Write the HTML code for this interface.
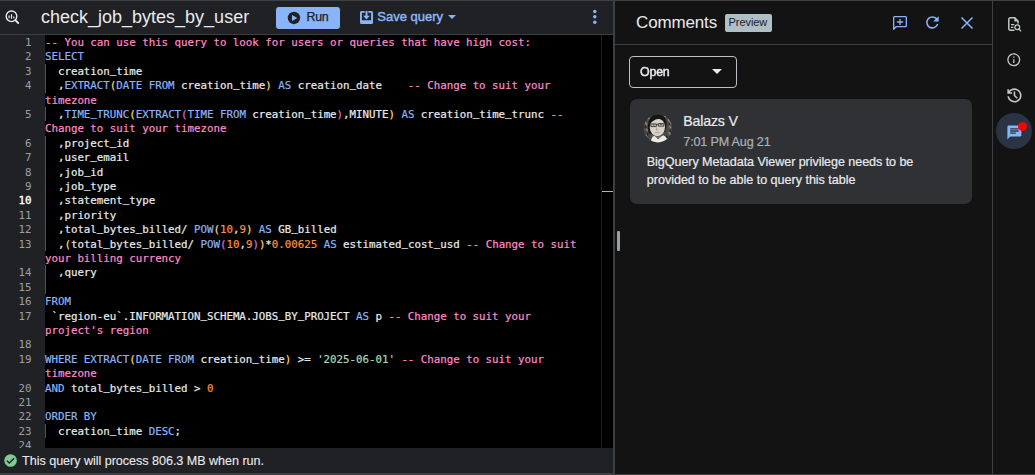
<!DOCTYPE html>
<html lang="en">
<head>
<meta charset="utf-8">
<title>check_job_bytes_by_user</title>
<style>
*{box-sizing:border-box;margin:0;padding:0}
html,body{width:1035px;height:475px;overflow:hidden;background:#131314}
body{position:relative;font-family:"Liberation Sans",sans-serif;color:#e8eaed}
.abs,.t{position:absolute}
.t{white-space:nowrap;line-height:1}
svg{position:absolute;display:block;overflow:visible}
#topline{left:0;top:0;width:1035px;height:1px;background:#3c4043}
#left{left:0;top:1px;width:613px;height:474px;background:#202124}
#hdrline{left:0;top:34px;width:613px;height:1px;background:#3c4043}
#title{left:41px;top:8px;font-size:18px;color:#e8eaed}
#run{left:276px;top:7px;width:64px;height:22px;background:#8ab4f8;border-radius:3px}
#runt{left:306.6px;top:11px;font-size:12.4px;letter-spacing:-0.3px;color:#202124;-webkit-text-stroke:0.25px #202124}
#save{left:377.3px;top:10px;font-size:13px;letter-spacing:0px;color:#8ab4f8;-webkit-text-stroke:0.45px #8ab4f8}
#editor{left:45px;top:35px;width:557px;height:413px;background:#000}
#gutter{left:0;top:35px;width:45px;height:413px;background:#202124}
#mini{left:601px;top:35px;width:12px;height:413px;background:#000;border-left:1px solid #1f1f1f}
#mini i{position:absolute;left:0;top:156px;width:11px;height:1px;background:#b4b4b4}
#code{position:absolute;left:0;top:35px;width:613px;height:413px;overflow:hidden}
.ln,.cl{position:absolute;font-family:"DejaVu Sans Mono","Liberation Mono",monospace;font-size:10.8px;letter-spacing:-0.022px;line-height:14.4px;height:14.4px;white-space:pre;-webkit-text-stroke:0.2px}
.cl u{text-decoration:none;position:relative;top:-2px}
.ln{left:0;width:31.5px;text-align:right;color:#9aa0a6;-webkit-text-stroke:0}
.ln.cur{color:#fff;-webkit-text-stroke:0.35px #fff}
.cl{left:45px;color:#e8eaed}
.ig{position:absolute;left:45px;width:1px;height:14.4px;background:#505254}
.c{color:#ff8bcb}.k{color:#8ab4f8}.s{color:#a8dab5}.n{color:#fa903e}.b1{color:#fdd663}.b2{color:#da70d6}
#status{left:0;top:448px;width:613px;height:25px;background:#202124}
#stt{left:22.1px;top:455px;font-size:12.6px;letter-spacing:-0.04px;color:#e8eaed;-webkit-text-stroke:0.1px}
#botline{left:0;top:473px;width:613px;height:2px;background:#3c4043}
#botline2{left:615px;top:474px;width:420px;height:1px;background:#3c4043}
#vdiv{left:613px;top:1px;width:2px;height:474px;background:#3c4043}
#grip{left:617px;top:231px;width:3px;height:20px;background:#9aa0a6;border-radius:1px}
#chdrline{left:615px;top:44px;width:377px;height:1px;background:#3c4043}
#ctitle{left:636px;top:14px;font-size:17px;letter-spacing:-0.14px;color:#e8eaed}
#badge{left:725px;top:14px;width:47px;height:18px;background:#b0bec5;border-radius:2px}
#badget{left:728.6px;top:17px;font-size:11px;letter-spacing:-0.07px;color:#202124}
#dd{left:629px;top:56px;width:108px;height:32px;border:1px solid #bdc1c6;border-radius:4px}
#ddt{left:639.6px;top:66px;font-size:12.4px;letter-spacing:-0.2px;color:#e8eaed;-webkit-text-stroke:0.45px #e8eaed;will-change:transform}
#card{left:630px;top:99px;width:342px;height:105px;background:#303134;border-radius:7px}
#name{left:683.3px;top:114px;font-size:14.2px;letter-spacing:-0.19px;color:#e8eaed;-webkit-text-stroke:0.2px}
#time{left:683.3px;top:136px;font-size:12.6px;letter-spacing:-0.175px;color:#abb2ba;-webkit-text-stroke:0.2px}
#body1{left:646.8px;top:156px;font-size:12.6px;letter-spacing:-0.076px;color:#e8eaed;-webkit-text-stroke:0.2px}
#body2{left:646.8px;top:174px;font-size:12.6px;letter-spacing:-0.035px;color:#e8eaed;-webkit-text-stroke:0.2px}
#rdiv{left:992px;top:1px;width:1px;height:474px;background:#3c4043}
#act{left:996px;top:113px;width:36px;height:36px;border-radius:18px;background:#2b3445}
#dot{left:1018px;top:122px;width:9px;height:9px;border-radius:50%;background:#ff0000}
</style>
</head>
<body>
<div class="abs" id="left"></div>
<div class="abs" id="hdrline"></div>
<!-- query icon -->
<svg style="left:4px;top:9px" width="16" height="16" viewBox="0 0 16 16"><circle cx="7.5" cy="7.3" r="5.3" fill="none" stroke="#e8eaed" stroke-width="1.4"/><path d="M11.3 11.1l2.900 2.900" stroke="#e8eaed" stroke-width="1.8" stroke-linecap="round"/><path d="M5.1 6.6v2.6M7.5 5.2v4.6M9.8 7.4v1.9" stroke="#e8eaed" stroke-width="1.2"/></svg>
<div class="t" id="title">check_job_bytes_by_user</div>
<div class="abs" id="run"></div>
<svg style="left:287px;top:11px" width="14" height="14" viewBox="0 0 14 14"><circle cx="6.95" cy="6.95" r="6.2" fill="#202124"/><path fill="#8ab4f8" d="M5 3.9v6.2l5.300-3.100z"/></svg>
<div class="t" id="runt">Run</div>
<!-- save icon -->
<svg style="left:360px;top:10.5px" width="13" height="13" viewBox="0 0 13 13"><path fill="#8ab4f8" fill-rule="evenodd" d="M1.5 0h3.2v1.8H1.9v7.4h9.2V1.8H8.3V0h3.2A1.5 1.5 0 0 1 13 1.5v10a1.5 1.5 0 0 1-1.5 1.5h-10A1.5 1.5 0 0 1 0 11.500v-10A1.5 1.500 0 0 1 1.500 0z"/><path fill="#8ab4f8" d="M5.500 0h2v4.800h2.400L6.500 8.500 3.100 4.800h2.400z"/></svg>
<div class="t" id="save">Save query</div>
<svg style="left:448.2px;top:14.8px" width="8" height="4" viewBox="0 0 8 4"><path fill="#8ab4f8" d="M0 0h8L4 4z"/></svg>
<svg style="left:592px;top:9px" width="6" height="16" viewBox="0 0 6 16"><circle cx="2.800" cy="2.400" r="1.750" fill="#8ab4f8"/><circle cx="2.800" cy="7.800" r="1.750" fill="#8ab4f8"/><circle cx="2.800" cy="13.300" r="1.750" fill="#8ab4f8"/></svg>
<div class="abs" id="gutter"></div>
<div class="abs" id="editor"></div>
<div class="abs" id="mini"><i></i></div>
<div id="code">
<div class="ln" style="top:1px">1</div>
<div class="cl" style="top:1px"><span class="c">-- You can use this query to look for users or queries that have high cost:</span></div>
<div class="ln" style="top:15.4px">2</div>
<div class="cl" style="top:15.4px"><span class="k">SELECT</span></div>
<div class="ln" style="top:29.8px">3</div>
<i class="ig" style="top:28.8px"></i>
<div class="cl" style="top:29.8px">  creation<u>_</u>time</div>
<div class="ln" style="top:44.2px">4</div>
<i class="ig" style="top:43.2px"></i>
<div class="cl" style="top:44.2px">  ,<span class="k">EXTRACT</span><span class="b1">(</span><span class="k">DATE FROM</span> creation<u>_</u>time<span class="b1">)</span><span class="k"> AS</span> creation<u>_</u>date    <span class="c">-- Change to suit your</span></div>
<div class="cl" style="top:58.6px"><span class="c">timezone</span></div>
<div class="ln" style="top:73px">5</div>
<i class="ig" style="top:72px"></i>
<div class="cl" style="top:73px">  ,<span class="k">TIME<u>_</u>TRUNC</span><span class="b1">(</span><span class="k">EXTRACT</span><span class="b2">(</span><span class="k">TIME FROM</span> creation<u>_</u>time<span class="b2">)</span>,MINUTE<span class="b1">)</span><span class="k"> AS</span> creation<u>_</u>time<u>_</u>trunc <span class="c">--</span></div>
<div class="cl" style="top:87.4px"><span class="c">Change to suit your timezone</span></div>
<div class="ln" style="top:101.8px">6</div>
<i class="ig" style="top:100.8px"></i>
<div class="cl" style="top:101.8px">  ,project<u>_</u>id</div>
<div class="ln" style="top:116.2px">7</div>
<i class="ig" style="top:115.2px"></i>
<div class="cl" style="top:116.2px">  ,user<u>_</u>email</div>
<div class="ln" style="top:130.6px">8</div>
<i class="ig" style="top:129.6px"></i>
<div class="cl" style="top:130.6px">  ,job<u>_</u>id</div>
<div class="ln" style="top:145px">9</div>
<i class="ig" style="top:144px"></i>
<div class="cl" style="top:145px">  ,job<u>_</u>type</div>
<div class="ln cur" style="top:159.4px">10</div>
<i class="ig" style="top:158.4px"></i>
<div class="cl" style="top:159.4px">  ,statement<u>_</u>type</div>
<div class="ln" style="top:173.8px">11</div>
<i class="ig" style="top:172.8px"></i>
<div class="cl" style="top:173.8px">  ,priority</div>
<div class="ln" style="top:188.2px">12</div>
<i class="ig" style="top:187.2px"></i>
<div class="cl" style="top:188.2px">  ,total<u>_</u>bytes<u>_</u>billed/ <span class="k">POW</span><span class="b1">(</span><span class="n">10</span>,<span class="n">9</span><span class="b1">)</span><span class="k"> AS</span> GB<u>_</u>billed</div>
<div class="ln" style="top:202.6px">13</div>
<i class="ig" style="top:201.6px"></i>
<div class="cl" style="top:202.6px">  ,<span class="b1">(</span>total<u>_</u>bytes<u>_</u>billed/ <span class="k">POW</span><span class="b2">(</span><span class="n">10</span>,<span class="n">9</span><span class="b2">)</span><span class="b1">)</span>*<span class="n">0.00625</span><span class="k"> AS</span> estimated<u>_</u>cost<u>_</u>usd <span class="c">-- Change to suit</span></div>
<div class="cl" style="top:217px"><span class="c">your billing currency</span></div>
<div class="ln" style="top:231.4px">14</div>
<i class="ig" style="top:230.4px"></i>
<div class="cl" style="top:231.4px">  ,query</div>
<div class="ln" style="top:245.8px">15</div>
<i class="ig" style="top:244.8px"></i>
<div class="ln" style="top:260.2px">16</div>
<div class="cl" style="top:260.2px"><span class="k">FROM</span></div>
<div class="ln" style="top:274.6px">17</div>
<div class="cl" style="top:274.6px"> `region-eu`.INFORMATION<u>_</u>SCHEMA.JOBS<u>_</u>BY<u>_</u>PROJECT<span class="k"> AS</span> p <span class="c">-- Change to suit your</span></div>
<div class="cl" style="top:289px"><span class="c">project's region</span></div>
<div class="ln" style="top:303.4px">18</div>
<div class="ln" style="top:317.8px">19</div>
<div class="cl" style="top:317.8px"><span class="k">WHERE EXTRACT</span><span class="b1">(</span><span class="k">DATE FROM</span> creation<u>_</u>time<span class="b1">)</span> &gt;= <span class="s">'2025-06-01'</span> <span class="c">-- Change to suit your</span></div>
<div class="cl" style="top:332.2px"><span class="c">timezone</span></div>
<div class="ln" style="top:346.6px">20</div>
<div class="cl" style="top:346.6px"><span class="k">AND</span> total<u>_</u>bytes<u>_</u>billed &gt; <span class="n">0</span></div>
<div class="ln" style="top:361px">21</div>
<div class="ln" style="top:375.4px">22</div>
<div class="cl" style="top:375.4px"><span class="k">ORDER BY</span></div>
<div class="ln" style="top:389.8px">23</div>
<i class="ig" style="top:388.8px"></i>
<div class="cl" style="top:389.8px">  creation<u>_</u>time<span class="k"> DESC</span>;</div>
<div class="ln" style="top:404.2px">24</div>
</div>
<div class="abs" id="status"></div>
<svg style="left:2.550px;top:452.650px" width="15.100" height="15.100" viewBox="0 0 24 24"><circle cx="12" cy="12" r="10" fill="#81c995"/><path fill="none" stroke="#202124" stroke-width="2.200" d="M6.300 12.300l3.700 3.700 7.800-7.800"/></svg>
<div class="t" id="stt">This query will process 806.3 MB when run.</div>
<div class="abs" id="botline"></div>
<div class="abs" id="vdiv"></div>
<div class="abs" id="grip"></div>
<div class="abs" id="chdrline"></div>
<div class="t" id="ctitle">Comments</div>
<div class="abs" id="badge"></div>
<div class="t" id="badget">Preview</div>
<!-- add comment -->
<svg style="left:892px;top:15px" width="16" height="16" viewBox="0 0 16 16"><path fill="none" stroke="#8ab4f8" stroke-width="1.300" stroke-linejoin="round" d="M2.550 1.650H13.450a.9.9 0 0 1 .9.9v8.100a.9.9 0 0 1-.9.9H4.400L1.650 14.300V2.550a.9.9 0 0 1 .9-.9z"/><path fill="none" stroke="#8ab4f8" stroke-width="1.300" d="M4.900 7h6.200M8 3.900v6.200"/></svg>
<!-- refresh -->
<svg style="left:922.700px;top:12.900px" width="18.800" height="18.800" viewBox="0 0 24 24"><path fill="#8ab4f8" d="M17.650 6.350C16.200 4.900 14.210 4 12 4c-4.420 0-7.990 3.580-7.990 8s3.570 8 7.990 8c3.730 0 6.840-2.550 7.730-6h-2.080c-.82 2.330-3.040 4-5.650 4-3.310 0-6-2.690-6-6s2.690-6 6-6c1.660 0 3.140.69 4.220 1.780L13 11h7V4l-2.350 2.350z"/></svg>
<!-- close -->
<svg style="left:961px;top:16.800px" width="12" height="12" viewBox="0 0 12 12"><path stroke="#8ab4f8" stroke-width="1.500" fill="none" d="M0.500 0.500l11 11M11.500 0.500l-11 11"/></svg>
<div class="abs" id="dd"></div>
<div class="t" id="ddt">Open</div>
<svg style="left:712px;top:69.400px" width="10" height="5" viewBox="0 0 10 5"><path fill="#e8eaed" d="M0 0h10L5 5z"/></svg>
<div class="abs" id="card"></div>
<!-- avatar -->
<svg style="left:640px;top:110px" width="36" height="36" viewBox="0 0 36 36"><defs><clipPath id="av"><circle cx="17.850" cy="18.300" r="14.100"/></clipPath><filter id="bl" x="-20%" y="-20%" width="140%" height="140%"><feGaussianBlur stdDeviation="0.650"/></filter></defs><g clip-path="url(#av)"><rect width="36" height="36" fill="#4a4a49"/><g filter="url(#bl)"><path d="M5 12l2 3M6 19l2 2M5.500 25l2.500 1M28 9l2 3M29 16l2 2M28.500 22l2 3M27 28l2 1M8 8l2 1M24 6l2 1M30 12l1 3" stroke="#858481" stroke-width="1.400" fill="none"/><path d="M4.500 16l2 2M29 13l1 2M7 23l1 3M30 20l1 2M26 26l2 2" stroke="#242424" stroke-width="1.300" fill="none"/><path d="M9 24C6 13 9.500 4.300 17.500 4.200c6.600-.1 10 4.800 8.900 11.800l-1.300 6z" fill="#151515"/><ellipse cx="17.400" cy="17.200" rx="7.600" ry="9" fill="#d6d2c7"/><path d="M9.600 14.500c.3-4.600 3.200-7.300 7.400-7.500 4-.2 7 1.500 8.200 5-2.300-2.300-4.600-3.200-7-2.900-3.300.4-6.200 2.300-8.600 5.400z" fill="#181818"/><path d="M10.800 13.900h5.600v2.700h-5.600zM18.400 13.500h5.400v2.700h-5.400zM16.400 14.600h2" stroke="#3e3d3a" stroke-width="0.900" fill="#bdb9b0"/><path d="M12.700 14.900h2M20 14.500h2" stroke="#4a4844" stroke-width="0.800"/><path d="M17 17.500l-.8 2.500h2M15 22.300q2.300.8 4.600 0" stroke="#9c9890" stroke-width="0.800" fill="none"/><path d="M12.500 25.200q4.800 3 10 0l.5 2.500h-11z" fill="#86837c"/><path d="M10.500 34c.3-4.600 1.500-6.900 3.800-8.200l3.700 3.400 5.300-4c3 1.300 4.700 4.200 5 8.800z" fill="#eceae4"/></g></g></svg>
<div class="t" id="name">Balazs V</div>
<div class="t" id="time">7:01 PM Aug 21</div>
<div class="t" id="body1">BigQuery Metadata Viewer privilege needs to be</div>
<div class="t" id="body2">provided to be able to query this table</div>
<div class="abs" id="rdiv"></div>
<!-- sidebar icons -->
<svg style="left:1008px;top:17px" width="14" height="15" viewBox="0 0 14 15"><path fill="none" stroke="#c4c7c5" stroke-width="1.500" stroke-linejoin="round" d="M6.500 13.200H2.300a1.500 1.500 0 0 1-1.500-1.500V2.300A1.500 1.500 0 0 1 2.300 0.800h4.500l3.200 3.200v2.600"/><path fill="#c4c7c5" d="M6.300 0.800v3.700h3.700z"/><path stroke="#c4c7c5" stroke-width="1.200" d="M3 7.700h3.200M3 10.300h2.400"/><circle cx="9.300" cy="10.300" r="2.400" fill="none" stroke="#c4c7c5" stroke-width="1.200"/><path stroke="#c4c7c5" stroke-width="1.300" stroke-linecap="round" d="M10.800 12l1.900 1.900"/></svg>
<svg style="left:1006.350px;top:52.200px" width="15.600" height="15.600" viewBox="0 0 24 24"><path fill="#c4c7c5" d="M11 7h2v2h-2zm0 4h2v6h-2zm1-9C6.480 2 2 6.480 2 12s4.480 10 10 10 10-4.480 10-10S17.520 2 12 2zm0 18c-4.410 0-8-3.590-8-8s3.590-8 8-8 8 3.590 8 8-3.590 8-8 8z"/></svg>
<svg style="left:1004.700px;top:86.2px" width="18.900" height="18.900" viewBox="0 0 24 24"><path fill="#c4c7c5" d="M12 21q-3.450 0-6.012-2.287T3.050 13H5.100q.35 2.600 2.313 4.300T12 19q2.925 0 4.963-2.037T19 12q0-2.925-2.037-4.962T12 5q-1.725 0-3.225.8T6.250 8H9v2H3V4h2v2.350q1.275-1.600 3.113-2.475T12 3q1.875 0 3.513.713t2.850 1.924q1.212 1.213 1.925 2.850T21 12q0 1.875-.712 3.513t-1.925 2.850q-1.213 1.212-2.850 1.925T12 21zm2.800-4.800L11 12.400V7h2v4.600l3.200 3.200-1.400 1.400z"/></svg>
<div class="abs" id="act"></div>
<svg style="left:1005.500px;top:123.600px" width="16.800" height="16.800" viewBox="0 0 24 24"><path fill="#8ab4f8" d="M20 2H4c-1.100 0-1.990.9-1.990 2L2 22l4-4h14c1.100 0 2-.9 2-2V4c0-1.100-.9-2-2-2zM6 9h12v2H6V9zm8 5H6v-2h8v2zm4-6H6V6h12v2z"/></svg>
<div class="abs" id="dot"></div>
<div class="abs" id="botline2"></div>
<div class="abs" id="topline"></div>
</body>
</html>
